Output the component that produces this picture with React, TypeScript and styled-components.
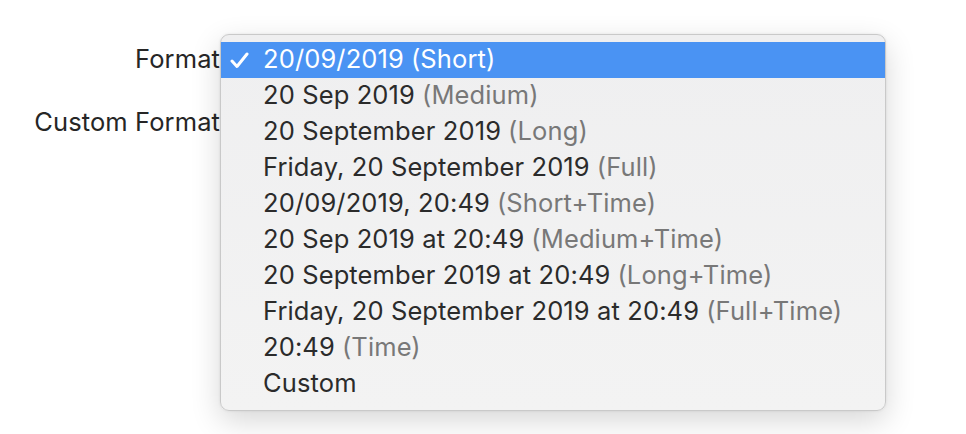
import React from "react";
import styled, { createGlobalStyle } from "styled-components";

const Global = createGlobalStyle`
  html, body { margin: 0; padding: 0; background: #ffffff; }
  body { font-family: Inter, "Liberation Sans", sans-serif; }
`;

const Page = styled.div`
  width: 966px;
  height: 434px;
  display: flex;
  align-items: flex-start;
  overflow: hidden;
`;

const Labels = styled.div`
  width: 220px;
  flex-shrink: 0;
  display: flex;
  flex-direction: column;
  align-items: flex-end;
  padding-top: 41px;
  gap: 27px;
`;

const Label = styled.div`
  height: 36px;
  line-height: 36px;
  font-size: 25.5px;
  letter-spacing: 0.1px;
  color: #262626;
`;

const Menu = styled.div`
  margin-top: 34px;
  width: 666px;
  box-sizing: border-box;
  padding: 7px 0 8px;
  background: linear-gradient(#efeff0, #f3f3f3);
  border: 1px solid #c9c9c9;
  border-radius: 9px;
  box-shadow: 0 10px 30px rgba(0, 0, 0, 0.16), 0 0 3px rgba(0, 0, 0, 0.08);
  display: flex;
  flex-direction: column;
`;

const Item = styled.div<{ $active?: boolean }>`
  height: 36px;
  line-height: 34px;
  display: flex;
  align-items: flex-start;
  padding-left: 9px;
  font-size: 25.5px;
  letter-spacing: 0.12px;
  white-space: nowrap;
  background: ${(p) => (p.$active ? "#4a93f3" : "transparent")};
  color: ${(p) => (p.$active ? "#ffffff" : "#2b2b2b")};
`;

const Check = styled.span`
  width: 33px;
  height: 36px;
  display: flex;
  align-items: center;
`;

const Note = styled.span<{ $active?: boolean }>`
  margin-left: 7px;
  color: ${(p) => (p.$active ? "#ffffff" : "#787878")};
`;

const options = [
  ["20/09/2019", "(Short)"],
  ["20 Sep 2019", "(Medium)"],
  ["20 September 2019", "(Long)"],
  ["Friday, 20 September 2019", "(Full)"],
  ["20/09/2019, 20:49", "(Short+Time)"],
  ["20 Sep 2019 at 20:49", "(Medium+Time)"],
  ["20 September 2019 at 20:49", "(Long+Time)"],
  ["Friday, 20 September 2019 at 20:49", "(Full+Time)"],
  ["20:49", "(Time)"],
  ["Custom", ""],
];

export default function App() {
  return (
    <Page>
      <Global />
      <Labels>
        <Label>Format</Label>
        <Label>Custom Format</Label>
      </Labels>
      <Menu>
        {options.map(([main, note], i) => (
          <Item key={i} $active={i === 0}>
            <Check>
              {i === 0 && (
                <svg width="19" height="17" viewBox="0 0 19 17">
                  <path
                    d="M2 9 L7 14.5 L17 2"
                    fill="none"
                    stroke="#ffffff"
                    strokeWidth="3"
                    strokeLinecap="round"
                    strokeLinejoin="round"
                  />
                </svg>
              )}
            </Check>
            {main}
            {note && <Note $active={i === 0}>{note}</Note>}
          </Item>
        ))}
      </Menu>
    </Page>
  );
}
